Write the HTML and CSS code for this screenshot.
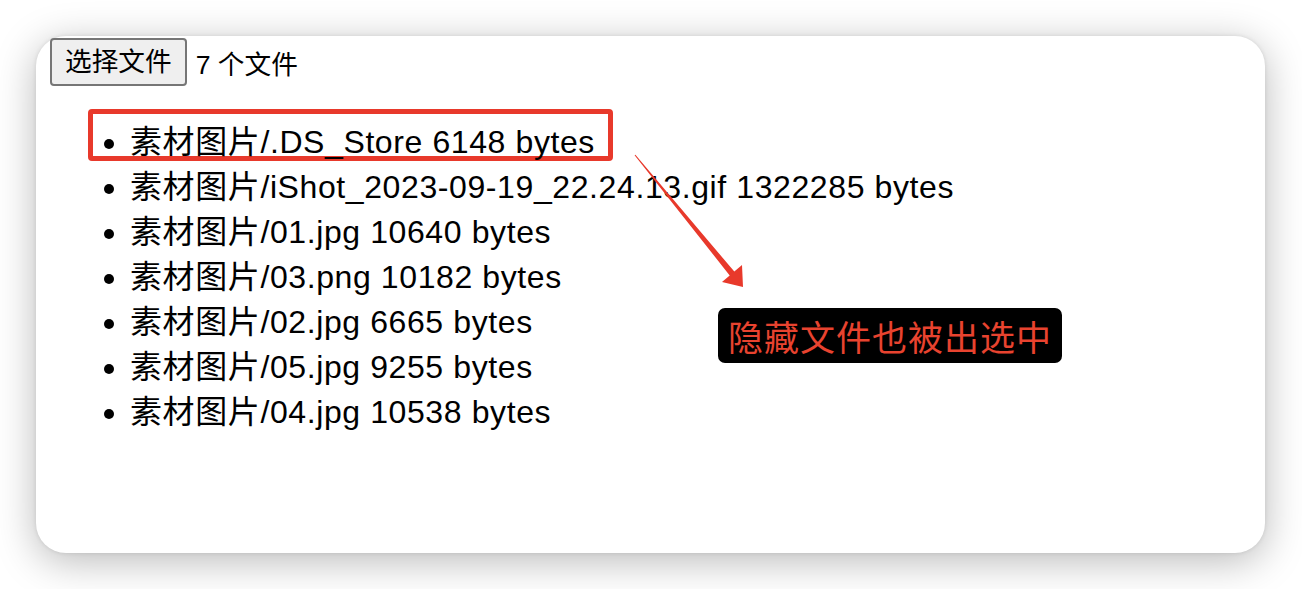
FILE: index.html
```html
<!DOCTYPE html>
<html lang="zh-CN">
<head>
<meta charset="utf-8">
<title>文件列表</title>
<link rel="stylesheet" href="styles.css">
</head>
<body>
<div class="stage">
  <div class="card">
    <div class="mark-box"></div>
    <div class="picker">
      <button class="file-btn" type="button">选择文件</button>
      <span class="file-count">7 个文件</span>
    </div>
    <ul class="file-list">
      <li>素材图片/.DS_Store 6148 bytes</li>
      <li>素材图片/iShot_2023-09-19_22.24.13.gif 1322285 bytes</li>
      <li>素材图片/01.jpg 10640 bytes</li>
      <li>素材图片/03.png 10182 bytes</li>
      <li>素材图片/02.jpg 6665 bytes</li>
      <li>素材图片/05.jpg 9255 bytes</li>
      <li>素材图片/04.jpg 10538 bytes</li>
    </ul>
    <svg class="arrow" viewBox="0 0 1229 517" width="1229" height="517" aria-hidden="true">
      <polygon fill="#e8392b" points="598.6,119.3 693.7,239.4 686,246 707,251 706,229 698.3,235.6 599.4,118.7"/>
    </svg>
    <div class="note">隐藏文件也被出选中</div>
  </div>
</div>
</body>
</html>
```
FILE: styles.css
```css
html, body {
  margin: 0;
  padding: 0;
  background: #ffffff;
}

body {
  font-family: "Liberation Sans", "Noto Sans CJK SC", sans-serif;
  color: #000;
}

.stage {
  padding: 36px;
  width: 1229px;
}

.card {
  position: relative;
  width: 1229px;
  height: 517px;
  background: #fff;
  border-radius: 30px;
  box-shadow: 0 8px 40px rgba(0, 0, 0, 0.28), 0 0 4px rgba(0, 0, 0, 0.1);
  padding: 2px 14px 0;
  box-sizing: border-box;
}

.picker {
  position: relative;
  display: flex;
  align-items: center;
  height: 48px;
}

.file-btn {
  font-family: "Liberation Sans", "Noto Sans CJK SC", sans-serif;
  font-size: 26.67px;
  height: 48px;
  padding: 0 13px;
  border: 2px solid #767676;
  border-radius: 4px;
  background: #efefef;
  color: #000;
  line-height: 1;
}

.file-count {
  margin-left: 9px;
  font-size: 26.67px;
}

.file-list {
  position: relative;
  margin: 34px 0 0;
  padding-left: 80px;
  font-size: 32px;
  line-height: 45px;
  letter-spacing: 0.6px;
}

.mark-box {
  position: absolute;
  left: 52px;
  top: 73px;
  width: 525px;
  height: 52px;
  border: 5px solid #e8392b;
  border-radius: 4px;
  box-sizing: border-box;
}

.arrow {
  position: absolute;
  left: 0;
  top: 0;
  pointer-events: none;
}

.note {
  position: absolute;
  left: 682px;
  top: 272px;
  width: 344px;
  height: 55px;
  background: #000;
  border-radius: 7px;
  color: #e8432f;
  font-family: "Noto Sans CJK SC", sans-serif;
  font-size: 35px;
  line-height: 55px;
  text-align: center;
  letter-spacing: 1px;
}
```
